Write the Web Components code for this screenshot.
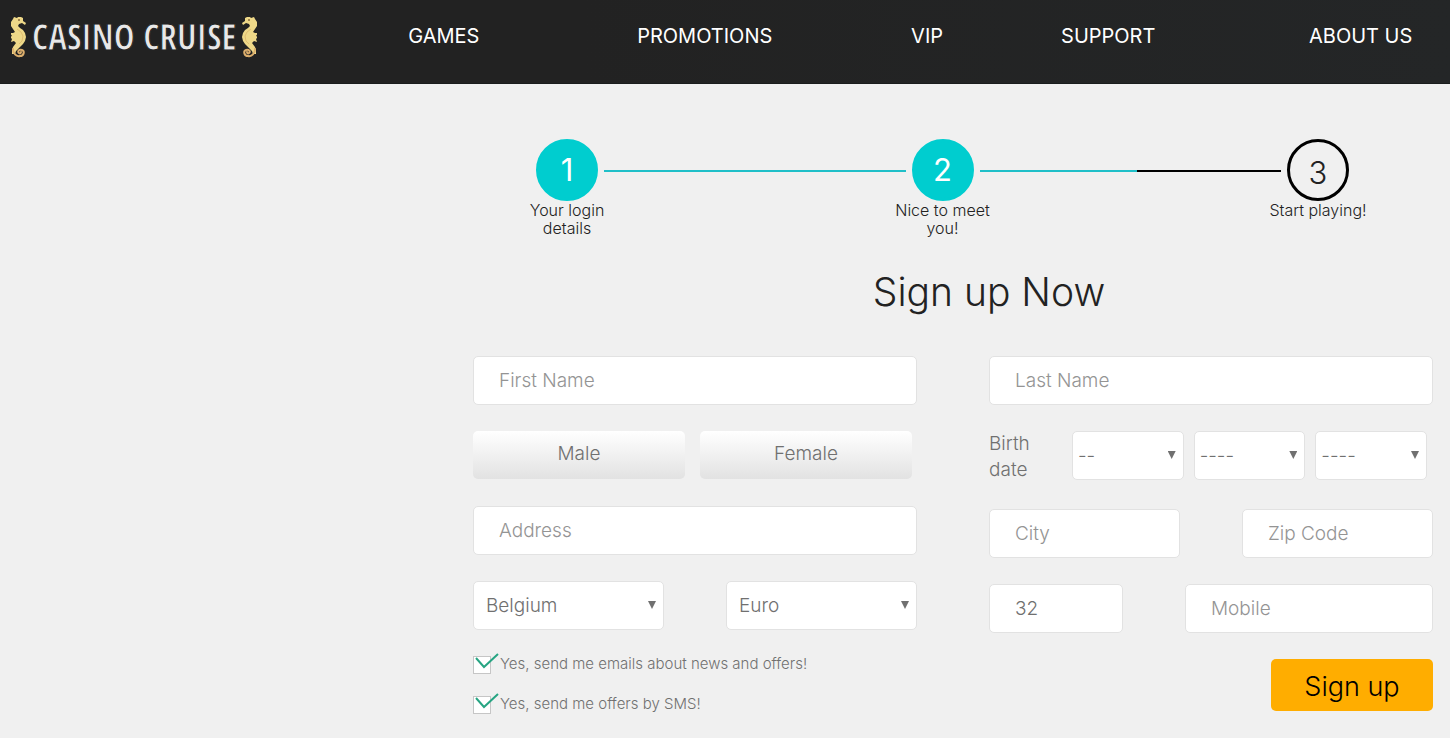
<!DOCTYPE html>
<html lang="en">
<head>
<meta charset="utf-8">
<title>Casino Cruise - Sign up</title>
<meta name="viewport" content="width=device-width, initial-scale=1">
<style>
  body { margin: 0; background: #f0f0f0; font-family: Inter, "Liberation Sans", sans-serif; font-weight: 300; color: #222; }
</style>
</head>
<body>
<cc-header></cc-header>
<cc-signup></cc-signup>

<script>
const define = (name, html, setup) => {
  const template = document.createElement('template');
  template.innerHTML = html;
  customElements.define(name, class extends HTMLElement {
    connectedCallback() {
      if (this.shadowRoot) return;
      const root = this.attachShadow({ mode: 'open' });
      root.append(template.content.cloneNode(true));
      if (setup) setup(this, root);
    }
  });
};

define('cc-seahorse', `
<style>
  :host { display: block; width: 15px; height: 42px; }
  :host([flip]) svg { transform: scaleX(-1); }
  svg { display: block; }
</style>
<svg width="15" height="42" viewBox="0 0 15 42" aria-hidden="true">
  <path fill="#eed888" d="M3 1l3 1 1-1 3 0 2 1 0 3 3 2-1 2-3-2-3 1-1 2 2 2 3 2 2 3 1 4-1 4-2 3-4 4-3 3-1 3-3 0 0-4 1-3 3-4-2-2-3 1 1-3-2-2 2-1-2-3 3 0 2-1-2-3-2-3 0-4 2-3z"/>
  <path fill="none" stroke="#dcae6c" stroke-width="2" stroke-linecap="round" d="M2 33c0 4 3 8 7 7 4 0 5-5 2-6-3-1-5 2-3 3 1 1 2 0 2-1"/>
  <path fill="none" stroke="#e0bd70" d="M6 13l4 3 2 4-1 5-3 3"/>
  <circle cx="8" cy="4" r="1" fill="#8a6c3a"/>
</svg>`);

define('cc-header', `
<style>
  :host { display: block; background: linear-gradient(90deg, #222 40%, #242627); color: #fff; border-bottom: 1px solid #1a1d1d; }
  header { display: flex; height: 83px; align-items: flex-start; }
  .brand { flex: 0 0 28.15%; box-sizing: border-box; padding: 16px 0 0 11px; display: flex; align-items: center; gap: 6px; color: #e8e8e8; text-decoration: none; white-space: nowrap; }
  .name { font: 400 35px/40px "Open Sans Condensed", "Liberation Sans Narrow", sans-serif; -webkit-text-stroke: 1px #222; }
  nav { flex: 1; display: grid; grid-template-columns: 229fr 274fr 150fr 248fr 141fr; padding-top: 24px; font-size: 20px; line-height: 24px; font-weight: 400; }
  nav a { color: #fff; text-decoration: none; white-space: nowrap; }
</style>
<header>
  <a class="brand" href="#"><cc-seahorse></cc-seahorse><span class="name">CASINO CRUISE</span><cc-seahorse flip></cc-seahorse></a>
  <nav><a href="#">GAMES</a><a href="#">PROMOTIONS</a><a href="#">VIP</a><a href="#">SUPPORT</a><a href="#">ABOUT US</a></nav>
</header>`);

define('cc-step', `
<style>
  :host { display: block; flex: 0 0 110px; text-align: center; font-size: 16px; line-height: 18px; }
  .dot { box-sizing: border-box; width: 62px; height: 62px; margin: 0 auto; border-radius: 50%; border: 3px solid #000; display: flex; align-items: center; justify-content: center; font-size: 31px; line-height: 36px; padding-top: 5px; }
  :host([done]) .dot { background: #00cdcf; border-color: #00cdcf; color: #fff; font-weight: 400; padding-top: 0; }
</style>
<div class="dot"></div><div><slot></slot></div>`,
(el, root) => { root.querySelector('.dot').textContent = el.getAttribute('number'); });

define('cc-steps', `
<style>
  :host { display: flex; align-items: flex-start; }
  .line { flex: 1; height: 2px; margin: 31px -18px 0; background: #1fbfc8; }
  .half { background: linear-gradient(90deg, #1fbfc8 52%, #000 52%); }
</style>
<cc-step number="1" done>Your login details</cc-step>
<div class="line"></div>
<cc-step number="2" done>Nice to meet you!</cc-step>
<div class="line half"></div>
<cc-step number="3">Start playing!</cc-step>`);

define('cc-input', `
<style>
  :host { display: block; min-width: 0; }
  input { display: block; box-sizing: border-box; width: 100%; height: 49px; margin: 0; padding: 0 25px; border: 1px solid #e2e2e2; border-radius: 5px; background: #fff; font: inherit; font-size: 19px; color: #707070; outline: none; }
  input::placeholder { color: #949494; opacity: 1; }
</style>
<input>`,
(el, root) => {
  const input = root.querySelector('input');
  const label = el.getAttribute('label');
  input.type = el.getAttribute('type') || 'text';
  input.setAttribute('aria-label', label);
  if (el.hasAttribute('value')) input.value = el.getAttribute('value');
  else input.placeholder = label;
});

define('cc-select', `
<style>
  :host { display: block; position: relative; min-width: 0; }
  select { appearance: none; display: block; box-sizing: border-box; width: 100%; height: 49px; margin: 0; padding: 0 20px 0 var(--inset, 12px); border: 1px solid #e2e2e2; border-radius: 5px; background: #fff; font: inherit; font-size: 19px; color: #707070; outline: none; }
  :host::after { content: ""; position: absolute; right: 8px; top: 20px; width: 8px; height: 8px; background: #707070; clip-path: polygon(0 0, 100% 0, 50% 100%); pointer-events: none; }
</style>
<select><option></option></select>`,
(el, root) => {
  root.querySelector('select').setAttribute('aria-label', el.getAttribute('label'));
  root.querySelector('option').textContent = el.getAttribute('value');
});

define('cc-check', `
<style>
  :host { display: block; }
  label { display: flex; position: relative; height: 18px; gap: 9px; font-size: 15px; line-height: 16px; color: #707070; }
  input { appearance: none; box-sizing: border-box; width: 18px; height: 18px; margin: 0; border: 1px solid #c6c6c6; background: #fff; }
  svg { position: absolute; left: 2px; top: -3px; display: none; pointer-events: none; }
  input:checked + svg { display: block; }
</style>
<label><input type="checkbox" checked>
  <svg width="24" height="18" viewBox="0 0 24 18" aria-hidden="true"><path d="M1 5l8 9L23 1" fill="none" stroke="#27a583" stroke-width="2"/></svg>
  <span><slot></slot></span></label>`);

define('cc-signup', `
<style>
  :host { display: block; padding: 55px 17px 24px 473px; }
  cc-steps { margin: 0 60px 0 39px; }
  h1 { margin: 33px 0 0 72px; text-align: center; font-size: 39px; line-height: 44px; font-weight: 300; color: #222; }
  form { display: grid; grid-template-columns: 1fr 1fr; gap: 72px; margin-top: 42px; }
  .col { display: flex; flex-direction: column; gap: 26px; min-width: 0; }
  .row { display: grid; grid-template-columns: 1fr 1fr; gap: 62px; }
  .sex { gap: 15px; padding-right: 5px; height: 49px; }
  .sex button { height: 48px; padding: 0 0 4px; border: 0; border-radius: 5px; background: linear-gradient(#fff, #e2e2e2); font: inherit; font-size: 19px; color: #707070; }
  .birth { grid-template-columns: 73px 1fr 1fr 1fr; gap: 10px; padding-right: 6px; font-size: 19px; line-height: 26px; color: #707070; --inset: 5px; }
  .birth span { padding-right: 20px; }
  .phone { grid-template-columns: 134fr 248fr; }
  .checks { display: grid; gap: 22px; }
  .submit { align-self: flex-end; width: 162px; height: 52px; padding: 2px 0 0; border: 0; border-radius: 5px; background: #ffad00; font: inherit; font-size: 27px; color: #000; }
</style>
<cc-steps></cc-steps>
<h1>Sign up Now</h1>
<form>
  <div class="col">
    <cc-input label="First Name"></cc-input>
    <div class="row sex"><button type="button">Male</button><button type="button">Female</button></div>
    <cc-input label="Address"></cc-input>
    <div class="row"><cc-select label="Country" value="Belgium"></cc-select><cc-select label="Currency" value="Euro"></cc-select></div>
    <div class="checks"><cc-check>Yes, send me emails about news and offers!</cc-check><cc-check>Yes, send me offers by SMS!</cc-check></div>
  </div>
  <div class="col">
    <cc-input label="Last Name"></cc-input>
    <div class="row birth" role="group" aria-labelledby="birth"><span id="birth">Birth date</span><cc-select label="Birth day" value="--"></cc-select><cc-select label="Birth month" value="----"></cc-select><cc-select label="Birth year" value="----"></cc-select></div>
    <div class="row"><cc-input label="City"></cc-input><cc-input label="Zip Code"></cc-input></div>
    <div class="row phone"><cc-input label="Country code" value="32"></cc-input><cc-input label="Mobile" type="tel"></cc-input></div>
    <button class="submit" type="submit">Sign up</button>
  </div>
</form>`);
</script>
</body>
</html>
